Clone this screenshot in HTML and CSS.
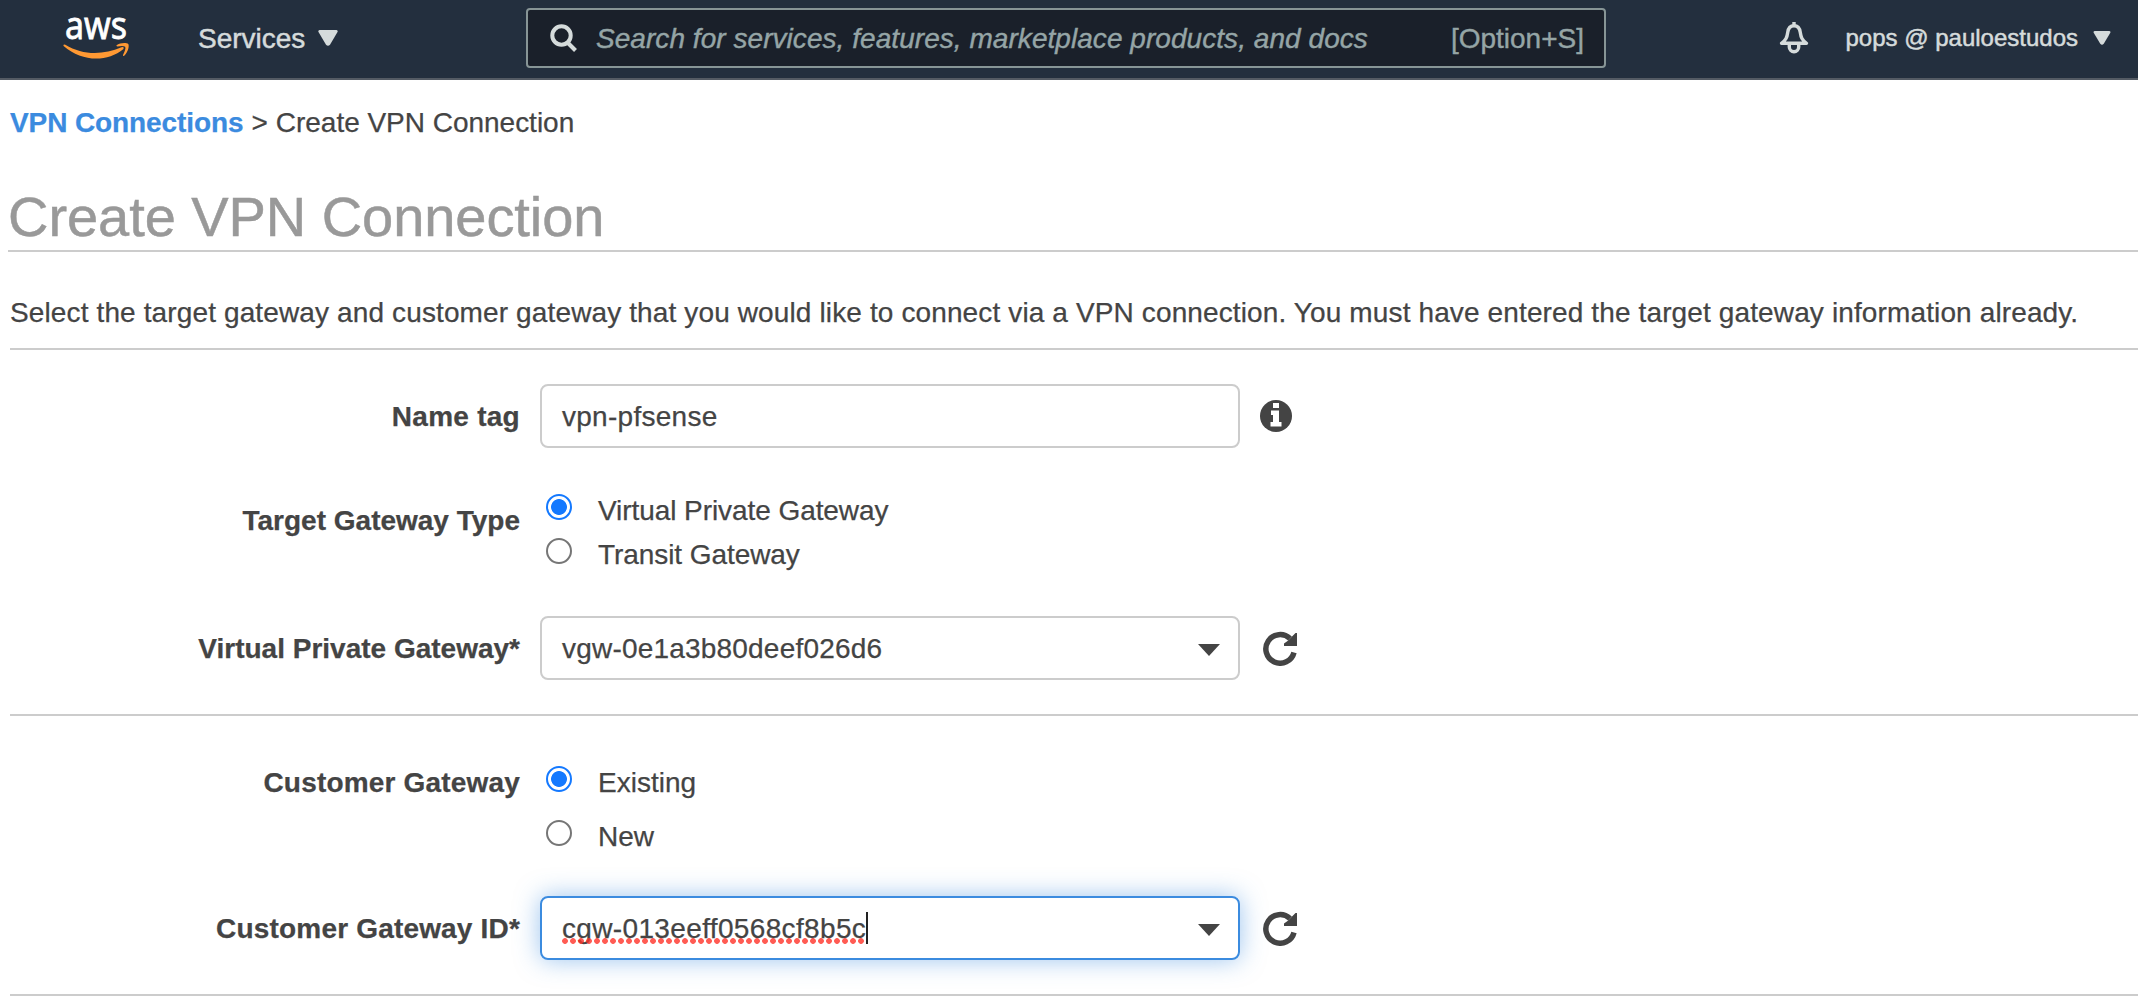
FILE: index.html
```html
<!DOCTYPE html>
<html lang="en">
<head>
<meta charset="utf-8">
<title>Create VPN Connection</title>
<link rel="stylesheet" href="styles.css">
</head>
<body>
<header class="topbar">
  <svg class="logo" viewBox="0 -18 66 60" width="66" height="60">
    <text class="logo-text" x="2" y="21.500" textLength="62" lengthAdjust="spacingAndGlyphs">aws</text>
    <path class="logo-smile" d="M0.4 28 Q0.8 27 2.3 27.7 C20 38.5 40 38 58.5 30.3 Q61.5 29.5 60.5 32 C44 45.500 19 45 0.600 29 Z"/>
    <path class="logo-smile" d="M53.500 28.200 C57 25.600 63.500 25.400 65.300 27 C66.600 29.500 64.600 35.700 61.200 38.700 Q59.900 39.500 60 38 C61.600 34.500 63 31.200 62.200 29.700 C60.500 28.500 57 29 54.500 29.400 Q53 29.200 53.500 28.200 Z"/>
  </svg>
  <span class="t services">Services</span>
  <svg class="services-caret" viewBox="0 0 20 16" width="20" height="16"><path d="M1.500 0h17q1.700.5 1 2L12 14.700q-2 2.300-4 0L.5 2Q-.2.500 1.500 0z"/></svg>
  <div class="search">
    <svg class="search-icon" viewBox="0 0 28 28" width="28" height="28"><circle cx="11.500" cy="11.500" r="9.200"/><path d="M17.500 18.500 25.500 26.500"/></svg>
    <span class="t placeholder">Search for services, features, marketplace products, and docs</span>
    <span class="t shortcut">[Option+S]</span>
  </div>
  <svg class="bell" viewBox="0 0 32 32" width="32" height="32">
    <path d="M3.500 21.300C8 18 9 15.500 9.700 10.500C10.300 6 12.500 3.800 16 3.800S21.700 6 22.300 10.500C23 15.500 24 18 28.500 21.300Z"/>
    <path d="M16 0v4M11.300 22v3a4.700 4.700 0 0 0 9.400 0v-3"/>
  </svg>
  <span class="t account">pops @ pauloestudos</span>
  <svg class="account-caret" viewBox="0 0 20 16" width="18" height="14"><path d="M1.500 0h17q1.700.5 1 2L12 14.700q-2 2.300-4 0L.5 2Q-.2.500 1.500 0z"/></svg>
</header>
<main class="page">
  <nav class="breadcrumb"><a class="t crumb-link">VPN Connections</a><span class="t crumb-sep">&gt;</span><span class="t crumb-current">Create VPN Connection</span></nav>
  <h1 class="title">Create VPN Connection</h1>
  <p class="intro"><span class="t">Select the target gateway and customer gateway that you would like to connect via a VPN connection. You must have entered the target gateway information already.</span></p>
  <section class="group target">
    <div class="row name-row">
      <label class="label"><span class="t">Name tag</span></label>
      <div class="field"><span class="t">vpn-pfsense</span></div>
      <svg class="info" viewBox="0 0 32 32" width="32" height="32"><circle cx="16" cy="16" r="16"/><path d="M13 3h6v5h-6zM11 10.500h8V22h2.500v4.500h-11V22H13v-7h-2z"/></svg>
    </div>
    <div class="row type-row">
      <label class="label"><span class="t">Target Gateway Type</span></label>
      <div class="options">
        <div class="option"><i class="radio checked"></i><span class="t">Virtual Private Gateway</span></div>
        <div class="option"><i class="radio"></i><span class="t">Transit Gateway</span></div>
      </div>
    </div>
    <div class="row gateway-row">
      <label class="label"><span class="t">Virtual Private Gateway*</span></label>
      <div class="field"><span class="t">vgw-0e1a3b80deef026d6</span><svg class="arrow" viewBox="0 0 22 12" width="22" height="12"><path d="M0 0h22L11 12z"/></svg></div>
      <svg class="refresh" viewBox="0 0 36 36" width="36" height="36"><path class="arc" d="M32 22.500A14.300 14.300 0 1 1 28 8.500"/><path class="head" d="M35 3V16H22V13.500L25.500 11 30 6.500 33.500 3Z"/></svg>
    </div>
  </section>
  <section class="group customer">
    <div class="row customer-row">
      <label class="label"><span class="t">Customer Gateway</span></label>
      <div class="options">
        <div class="option"><i class="radio checked"></i><span class="t">Existing</span></div>
        <div class="option"><i class="radio"></i><span class="t">New</span></div>
      </div>
    </div>
    <div class="row id-row">
      <label class="label"><span class="t">Customer Gateway ID*</span></label>
      <div class="field focused"><span class="t misspelled">cgw-013eeff0568cf8b5c</span><i class="cursor"></i><svg class="arrow" viewBox="0 0 22 12" width="22" height="12"><path d="M0 0h22L11 12z"/></svg></div>
      <svg class="refresh" viewBox="0 0 36 36" width="36" height="36"><path class="arc" d="M32 22.500A14.300 14.300 0 1 1 28 8.500"/><path class="head" d="M35 3V16H22V13.500L25.500 11 30 6.500 33.500 3Z"/></svg>
    </div>
  </section>
</main>
</body>
</html>
```
FILE: styles.css
```css
* { box-sizing: border-box; }
body {
  margin: 0;
  height: 1000px;
  overflow: hidden;
  background: #fff;
  color: #444;
  font: 28px/32px "Liberation Sans", Arial, sans-serif;
}
svg { display: block; flex: none; }
.t { white-space: nowrap; -webkit-text-stroke: .25px; }

/* Top bar */
.topbar {
  display: flex;
  align-items: flex-start;
  height: 80px;
  padding: 8px 27px 0 63px;
  background: #232f3e;
  border-bottom: 2px solid #545b64;
  color: #d5dbdb;
  line-height: 60px;
}
.topbar > svg { fill: #d5dbdb; }
.logo { margin-top: -9px; overflow: visible; }
.logo-text { font: 400 38px "Noto Sans", sans-serif; fill: #fff; stroke: #fff; stroke-width: .8; }
.logo-smile { fill: #f93; }
.services { margin-left: 69px; line-height: 61px; -webkit-text-stroke: .5px; }
.services-caret { margin: 22px 0 0 13px; }
.search {
  position: absolute;
  left: 526px;
  width: 1080px;
  height: 60px;
  display: flex;
  align-items: center;
  padding: 0 20px 0 22px;
  border: 2px solid #879596;
  border-radius: 4px;
  background: #1a202a;
  color: #95a5a6;
  line-height: 56px;
}
.search .t { padding-top: 1px; -webkit-text-stroke: .4px; }
.search-icon { fill: none; stroke: #d5dbdb; stroke-width: 4; }
.placeholder { margin-left: 18px; font-style: italic; letter-spacing: .05px; }
.shortcut { margin-left: auto; }
.bell { margin: 14px 0 0 auto; }
.topbar > .bell { fill: none; stroke: #d5dbdb; stroke-width: 3.4; stroke-linejoin: round; }
.account { margin-left: 35px; font-size: 24px; line-height: 60px; -webkit-text-stroke: .5px; }
.account-caret { margin: 23px 0 0 15px; }

/* Page heading */
.breadcrumb { display: flex; padding: 27px 0 0 10px; }
.crumb-link { color: #3b8bdf; font-weight: bold; letter-spacing: -.1px; }
.crumb-sep { margin: 0 8px; }
.crumb-current { letter-spacing: -.02px; }
.title {
  height: 67px;
  margin: 46px 0 0 8px;
  border-bottom: 2px solid #ccc;
  color: #999;
  font-size: 56px;
  font-weight: normal;
  letter-spacing: -.06px;
  line-height: 63px;
  -webkit-text-stroke: .5px;
}
.intro {
  height: 98px;
  margin: 0 0 0 10px;
  padding-top: 45px;
  border-bottom: 2px solid #ccc;
  letter-spacing: .127px;
}

/* Form */
.group { margin-left: 10px; border-bottom: 2px solid #ccc; }
.target { height: 366px; padding-top: 34px; }
.customer { height: 280px; padding-top: 50px; }
.row { display: flex; align-items: center; height: 64px; }
.row .t { display: block; padding-top: 2px; }
.label { width: 510px; font-weight: bold; text-align: right; }
.field {
  position: relative;
  display: flex;
  align-items: center;
  width: 700px;
  height: 64px;
  margin-left: 20px;
  padding: 0 18px 0 20px;
  border: 2px solid #ccc;
  border-radius: 8px;
}
.arrow { margin: 4px 0 0 auto; fill: #444; }
.focused { border-color: #3b8bdf; box-shadow: 0 0 24px rgba(59, 139, 223, .5); }
.misspelled { position: relative; }
.misspelled::after {
  content: "";
  position: absolute;
  left: 0;
  right: 0;
  top: 27px;
  height: 6px;
  background: radial-gradient(circle at 3px 3px, rgba(255, 50, 40, .8) 2.500px, transparent 3.200px) 0 0 / 8px 6px;
}
.cursor { width: 2px; height: 32px; background: #222; }
.info { margin-left: 20px; fill: #444; }
.info path { fill: #fff; }
.refresh { margin-left: 22px; }
.refresh .arc { fill: none; stroke: #444; stroke-width: 5.500; }
.refresh .head { fill: #444; }
.name-row { letter-spacing: .27px; }
.type-row { align-items: flex-start; height: 76px; margin: 46px 0; }
.type-row .label { margin-top: 9px; }
.type-row .option { letter-spacing: -.07px; }
.gateway-row .field { letter-spacing: .2px; }
.options { margin-left: 26px; }
.option { display: flex; align-items: flex-start; }
.option + .option { margin-top: 11px; }
.row .option .t, .customer-row .label .t { padding-top: 1px; }
.radio {
  width: 26px;
  height: 26px;
  margin-right: 26px;
  border: 2px solid #767676;
  border-radius: 50%;
}
.checked { border-color: #1479ff; background: radial-gradient(circle, #1479ff 7.500px, #fff 8.300px); }
.customer-row { align-items: flex-start; height: 86px; margin-bottom: 44px; }
.customer-row .option + .option { margin-top: 21px; }
.customer-row .label, .id-row .label { letter-spacing: .18px; }
.id-row .field { letter-spacing: .35px; }
```
